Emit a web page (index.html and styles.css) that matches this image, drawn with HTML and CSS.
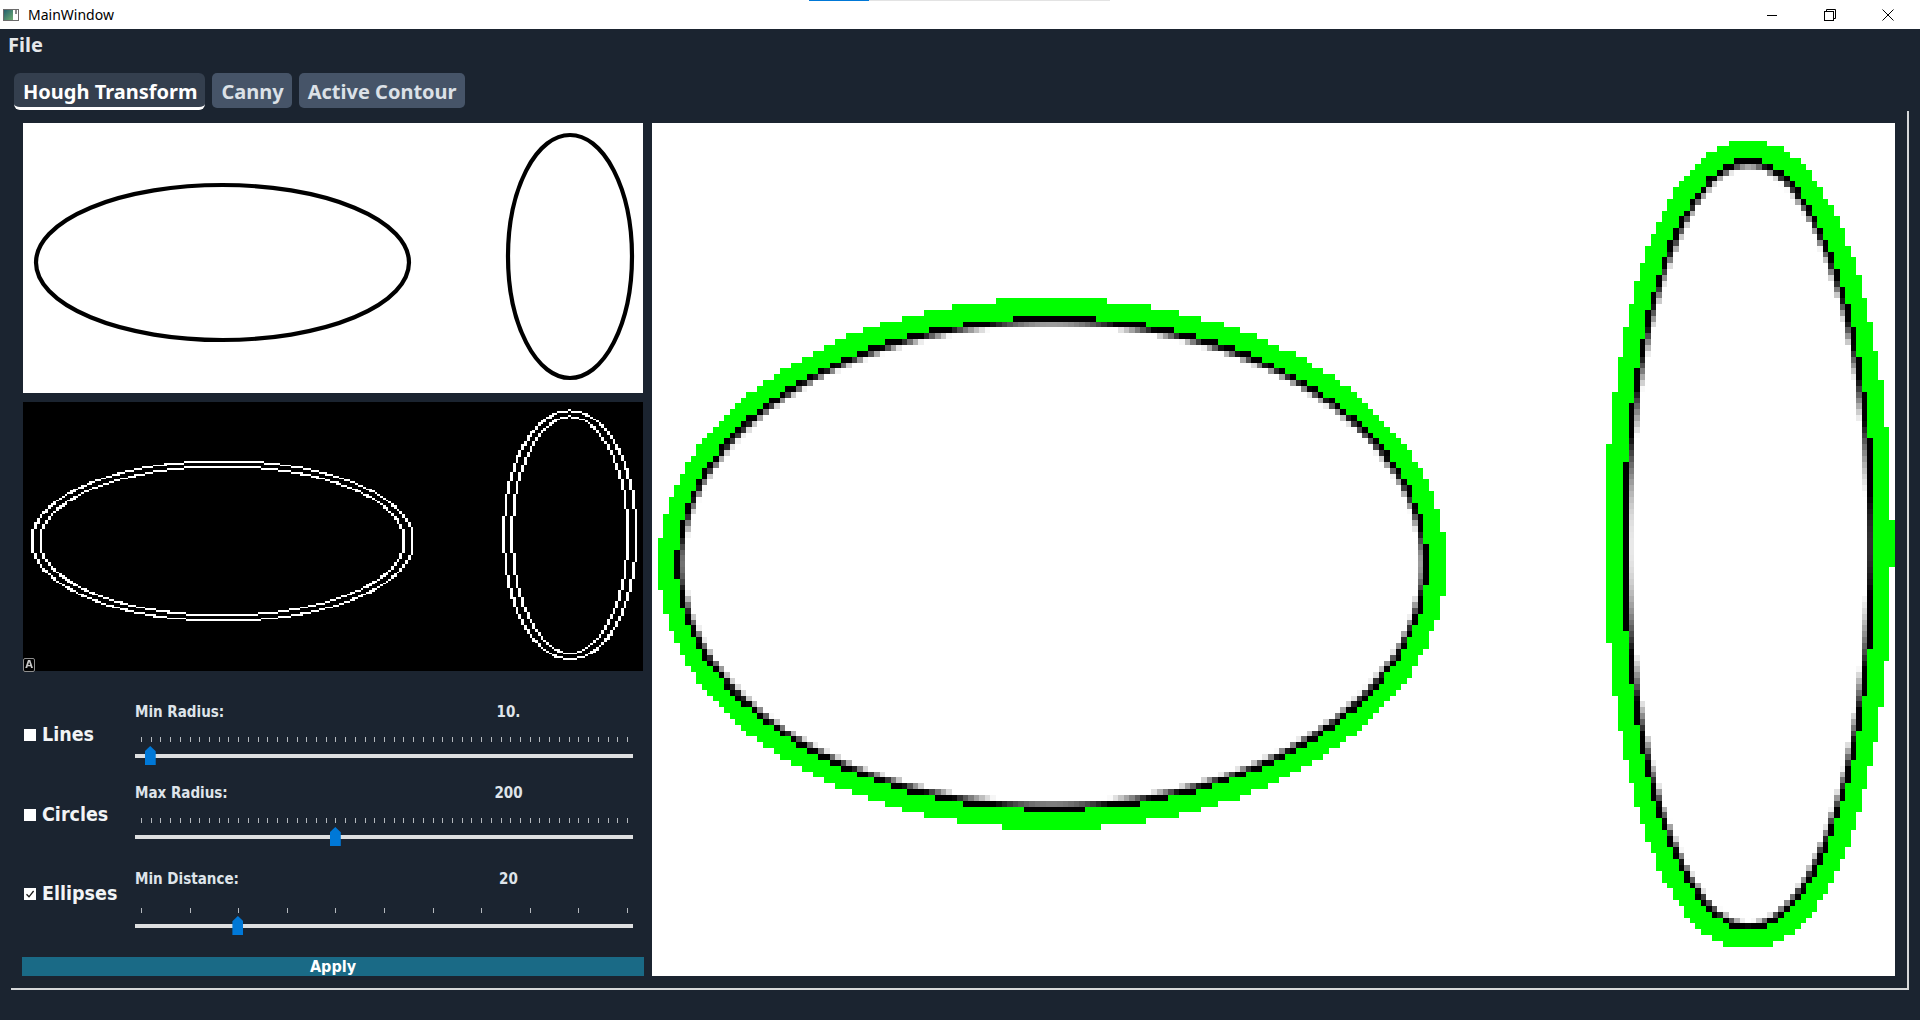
FILE: index.html
```html
<!DOCTYPE html>
<html lang="en">
<head>
<meta charset="utf-8">
<title>MainWindow</title>
<link rel="stylesheet" href="styles.css">
</head>
<body>
<div class="window">
  <header class="titlebar">
    <div class="progress"><span class="progress-done"></span><span class="progress-rest"></span></div>
    <svg class="app-icon" viewBox="0 0 16 12" width="16" height="12">
      <defs>
        <linearGradient id="ig" x1="0" y1="0" x2="1" y2="1">
          <stop offset="0" stop-color="#24606e"/>
          <stop offset="1" stop-color="#6fae72"/>
        </linearGradient>
      </defs>
      <rect x="0.5" y="0.5" width="15" height="11" fill="#fff" stroke="#6b6b6b"/>
      <rect x="1" y="1" width="9" height="10" fill="url(#ig)"/>
      <rect x="12" y="1" width="2" height="4" fill="#8a8a8a"/>
    </svg>
    <span class="title">MainWindow</span>
    <div class="win-buttons">
      <div class="wbtn"><svg width="12" height="12" viewBox="0 0 12 12"><path d="M1 6.5h10" stroke="#000" stroke-width="1" fill="none"/></svg></div>
      <div class="wbtn"><svg width="12" height="12" viewBox="0 0 12 12"><rect x="0.5" y="2.5" width="9" height="9" fill="none" stroke="#000"/><path d="M2.5 2.5V0.5H11.5V9.5H9.5" fill="none" stroke="#000"/></svg></div>
      <div class="wbtn"><svg width="12" height="12" viewBox="0 0 12 12"><path d="M0.5 0.5L11.5 11.5M11.5 0.5L0.5 11.5" stroke="#000" stroke-width="1" fill="none"/></svg></div>
    </div>
  </header>

  <nav class="menubar"><span class="menu-item">File</span></nav>

  <main class="central">
    <div class="tabbar">
      <div class="tab active">Hough Transform</div>
      <div class="tab">Canny</div>
      <div class="tab">Active Contour</div>
    </div>

    <section class="pane">
      <div class="left-col">
        <div class="img-panel original">
          <svg viewBox="0 0 620 270" width="620" height="270">
            <ellipse cx="199.5" cy="139.5" rx="186.5" ry="77.5" fill="none" stroke="#000" stroke-width="4.2"/>
            <ellipse cx="547" cy="133.5" rx="62" ry="121.5" fill="none" stroke="#000" stroke-width="4.2"/>
          </svg>
        </div>
        <div class="img-panel canny">
          <canvas id="canny" class="pix" width="224" height="146"></canvas>
          <span class="a-badge">A</span>
        </div>

        <div class="options">
          <div class="opt-row row-lines">
            <label class="check"><span class="box"></span><span class="check-text">Lines</span></label>
            <div class="slider">
              <div class="slider-head"><span>Min Radius:</span><span class="val">10.</span></div>
              <div class="slider-body">
                <div class="ticks">
                  <i></i><i></i><i></i><i></i><i></i><i></i><i></i><i></i><i></i><i></i>
                  <i></i><i></i><i></i><i></i><i></i><i></i><i></i><i></i><i></i><i></i>
                  <i></i><i></i><i></i><i></i><i></i><i></i><i></i><i></i><i></i><i></i>
                  <i></i><i></i><i></i><i></i><i></i><i></i><i></i><i></i><i></i><i></i>
                  <i></i><i></i><i></i><i></i><i></i><i></i><i></i><i></i><i></i><i></i>
                  <i></i>
                </div>
                <div class="track"><span class="handle" style="--v:0.02"></span></div>
              </div>
            </div>
          </div>

          <div class="opt-row row-circles">
            <label class="check"><span class="box"></span><span class="check-text">Circles</span></label>
            <div class="slider">
              <div class="slider-head"><span>Max Radius:</span><span class="val">200</span></div>
              <div class="slider-body">
                <div class="ticks">
                  <i></i><i></i><i></i><i></i><i></i><i></i><i></i><i></i><i></i><i></i>
                  <i></i><i></i><i></i><i></i><i></i><i></i><i></i><i></i><i></i><i></i>
                  <i></i><i></i><i></i><i></i><i></i><i></i><i></i><i></i><i></i><i></i>
                  <i></i><i></i><i></i><i></i><i></i><i></i><i></i><i></i><i></i><i></i>
                  <i></i><i></i><i></i><i></i><i></i><i></i><i></i><i></i><i></i><i></i>
                  <i></i>
                </div>
                <div class="track"><span class="handle" style="--v:0.4"></span></div>
              </div>
            </div>
          </div>

          <div class="opt-row row-ellipses">
            <label class="check"><span class="box checked"><svg width="12" height="12" viewBox="0 0 12 12"><path d="M2.5 6.2L5 8.8L9.6 3" fill="none" stroke="#1b1b1b" stroke-width="1.3"/></svg></span><span class="check-text">Ellipses</span></label>
            <div class="slider">
              <div class="slider-head"><span>Min Distance:</span><span class="val">20</span></div>
              <div class="slider-body">
                <div class="ticks">
                  <i></i><i></i><i></i><i></i><i></i><i></i><i></i><i></i><i></i><i></i><i></i>
                </div>
                <div class="track"><span class="handle" style="--v:0.2"></span></div>
              </div>
            </div>
          </div>
        </div>

        <div class="apply">Apply</div>
      </div>

      <div class="result">
        <canvas id="result" class="pix" width="224" height="146"></canvas>
      </div>
    </section>
  </main>
</div>
<script src="script.js"></script>
</body>
</html>
```

FILE: styles.css
```css
* { box-sizing: border-box; }

html, body {
  margin: 0;
  padding: 0;
}

body {
  width: 1920px;
  height: 1020px;
  overflow: hidden;
  background: #1b2430;
  font-family: "Noto Sans", "DejaVu Sans", sans-serif;
}

.window {
  width: 1920px;
  height: 1020px;
  display: flex;
  flex-direction: column;
}

/* ---------- title bar ---------- */
.titlebar {
  position: relative;
  height: 29px;
  background: #ffffff;
  display: flex;
  align-items: center;
  flex: none;
}

.progress {
  position: absolute;
  top: 0;
  left: 809px;
  height: 1px;
  display: flex;
}
.progress-done { width: 60px; height: 1px; background: #0078d7; }
.progress-rest { width: 241px; height: 1px; background: #e3e3e3; }

.app-icon {
  margin-left: 3px;
  display: block;
}

.title {
  margin-left: 9px;
  font-size: 14px;
  color: #000;
}

.win-buttons {
  margin-left: auto;
  padding-right: 3px;
  height: 100%;
  display: flex;
}

.wbtn {
  width: 58px;
  height: 100%;
  display: flex;
  align-items: center;
  justify-content: center;
}
.wbtn svg { display: block; }

/* ---------- menu bar ---------- */
.menubar {
  height: 33px;
  padding-left: 8px;
  flex: none;
}

.menu-item {
  font-size: 20px;
  font-weight: 700;
  line-height: 31px;
  color: #e6e8ea;
}

/* ---------- central / tabs ---------- */
.central {
  padding: 11px 0 0 11px;
}

.tabbar {
  height: 38px;
  padding-left: 3px;
  display: flex;
  align-items: flex-start;
  gap: 7px;
}

.tab {
  height: 35px;
  padding: 0 8px 0 9px;
  background: #465468;
  color: #dce1e7;
  border-radius: 5px;
  font-size: 20px;
  font-weight: 700;
  line-height: 37px;
  white-space: nowrap;
}

.tab.active {
  height: 37px;
  background: #343f4e;
  color: #ffffff;
  border-bottom: 3px solid #ffffff;
  border-radius: 6px;
}

.pane {
  width: 1898px;
  height: 879px;
  padding: 12px;
  border-right: 2px solid #d6d8da;
  border-bottom: 2px solid #d6d8da;
  display: flex;
  gap: 9px;
}

/* ---------- left column ---------- */
.left-col {
  width: 620px;
  flex: none;
  display: flex;
  flex-direction: column;
}

.img-panel { flex: none; }

.img-panel.original {
  height: 270px;
  background: #ffffff;
  margin-bottom: 9px;
}
.img-panel.original svg { display: block; }

.img-panel.canny {
  position: relative;
  height: 269px;
  background: #000000;
}

.img-panel.canny canvas {
  display: block;
  width: 620px;
  height: 269px;
}

.pix { image-rendering: pixelated; }

.a-badge {
  position: absolute;
  left: 0;
  bottom: -1px;
  width: 12px;
  height: 14px;
  border: 1px solid #8f8f8f;
  border-radius: 2px;
  color: #c9c9c9;
  font-family: "DejaVu Sans", sans-serif;
  font-size: 10px;
  font-weight: 700;
  line-height: 12px;
  text-align: center;
}

.options {
  height: 286px;
  padding-top: 32px;
  flex: none;
  font-family: "DejaVu Sans Condensed", "DejaVu Sans", sans-serif;
  font-stretch: condensed;
  font-weight: 700;
}

.opt-row { display: flex; align-items: flex-start; }
.row-lines { height: 81px; }
.row-circles { height: 86px; }
.row-ellipses { height: 87px; }

.check {
  width: 111px;
  margin-left: 1px;
  display: flex;
  align-items: center;
  height: 24px;
  color: #f2f4f6;
  font-size: 19.5px;
  line-height: 24px;
}
.row-lines .check { margin-top: 20px; }
.row-circles .check { margin-top: 19px; }
.row-ellipses .check { margin-top: 12px; }

.box {
  width: 12px;
  height: 12px;
  background: #ffffff;
  margin-right: 6px;
  flex: none;
}
.box svg { display: block; }

.slider { width: 498px; }

.slider-head {
  display: grid;
  grid-template-columns: 1fr 1fr;
  height: 18px;
  font-size: 15px;
  line-height: 18px;
  color: #dfe4ea;
}
.slider-head .val { text-align: center; }

.ticks {
  width: 487px;
  height: 5px;
  margin: 16px 0 0 6px;
  display: flex;
  justify-content: space-between;
}
.row-ellipses .ticks { margin-top: 20px; }

.ticks i {
  display: block;
  width: 1px;
  height: 5px;
  background: #b4b8bd;
}

.track {
  position: relative;
  width: 498px;
  height: 4px;
  margin-top: 12px;
  background: #dedfe0;
}
.row-ellipses .track { margin-top: 11px; }

.handle {
  position: absolute;
  top: -8px;
  left: calc(var(--v) * 487px);
  width: 11px;
  height: 19px;
  background: #0078d7;
  clip-path: polygon(50% 0, 100% 28%, 100% 100%, 0 100%, 0 28%);
}

.apply {
  height: 19px;
  margin: 0 -1px;
  background: #1a6a86;
  color: #ffffff;
  text-align: center;
  font-family: "DejaVu Sans Condensed", "DejaVu Sans", sans-serif;
  font-stretch: condensed;
  font-weight: 700;
  font-size: 16px;
  line-height: 20px;
  flex: none;
}

/* ---------- result ---------- */
.result {
  width: 1243px;
  height: 853px;
  background: #ffffff;
  flex: none;
}

.result canvas {
  display: block;
  width: 1243px;
  height: 853px;
}
```

FILE: script.js
```js
(function () {
  var W = 224, H = 146;
  var ellipses = [
    { cx: 0.3218, cy: 0.5167, rx: 0.3008, ry: 0.287 },
    { cx: 0.8823, cy: 0.4944, rx: 0.100, ry: 0.450 }
  ];

  function signedDist(e, x, y) {
    var cx = e.cx * W, cy = e.cy * H, rx = e.rx * W, ry = e.ry * H;
    var dx = x - cx, dy = y - cy;
    var r = Math.sqrt((dx * dx) / (rx * rx) + (dy * dy) / (ry * ry));
    if (r === 0) { return -Math.min(rx, ry); }
    var gx = dx / (rx * rx * r), gy = dy / (ry * ry * r);
    var g = Math.sqrt(gx * gx + gy * gy);
    return (r - 1) / g;
  }

  function nearest(x, y) {
    var best = null;
    for (var i = 0; i < ellipses.length; i++) {
      var d = signedDist(ellipses[i], x, y);
      if (best === null || Math.abs(d) < Math.abs(best)) { best = d; }
    }
    return best;
  }

  function paint(id, fn) {
    var c = document.getElementById(id);
    if (!c || !c.getContext) { return; }
    var ctx = c.getContext('2d');
    var img = ctx.createImageData(W, H);
    var p = 0;
    for (var y = 0; y < H; y++) {
      for (var x = 0; x < W; x++) {
        var col = fn(nearest(x + 0.5, y + 0.5));
        img.data[p] = col[0];
        img.data[p + 1] = col[1];
        img.data[p + 2] = col[2];
        img.data[p + 3] = 255;
        p += 4;
      }
    }
    ctx.putImageData(img, 0, 0);
  }

  paint('canny', function (d) {
    var on = Math.abs(d - 1.5) < 0.5 || Math.abs(d + 1.5) < 0.5;
    return on ? [255, 255, 255] : [0, 0, 0];
  });

  paint('result', function (d) {
    if (d > 0.3 && d < 3.5) { return [0, 255, 0]; }
    var cov = Math.max(0, Math.min(1, 1.35 - Math.abs(d)));
    var v = Math.round(255 * (1 - cov));
    return [v, v, v];
  });
})();
```
